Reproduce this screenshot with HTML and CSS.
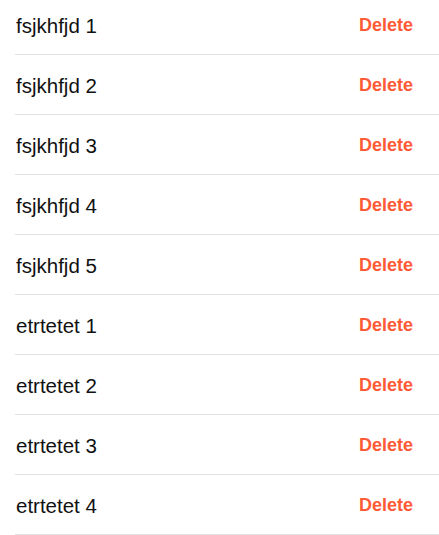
FILE: index.html
```html
<!DOCTYPE html>
<html>
<head>
<meta charset="utf-8">
<link rel="stylesheet" href="styles.css">
</head>
<body>
<ul class="list">
  <li class="row"><span class="label">fsjkhfjd 1</span><button class="del">Delete</button></li>
  <li class="row"><span class="label">fsjkhfjd 2</span><button class="del">Delete</button></li>
  <li class="row"><span class="label">fsjkhfjd 3</span><button class="del">Delete</button></li>
  <li class="row"><span class="label">fsjkhfjd 4</span><button class="del">Delete</button></li>
  <li class="row"><span class="label">fsjkhfjd 5</span><button class="del">Delete</button></li>
  <li class="row"><span class="label">etrtetet 1</span><button class="del">Delete</button></li>
  <li class="row"><span class="label">etrtetet 2</span><button class="del">Delete</button></li>
  <li class="row"><span class="label">etrtetet 3</span><button class="del">Delete</button></li>
  <li class="row"><span class="label">etrtetet 4</span><button class="del">Delete</button></li>
</ul>
</body>
</html>
```
FILE: styles.css
```css
html, body {
  margin: 0;
  padding: 0;
  background: #ffffff;
  overflow: hidden;
}
.list {
  list-style: none;
  margin: -5px 0 0 15px;
  padding: 0;
}
.row {
  box-sizing: border-box;
  height: 60px;
  border-bottom: 1px solid #e2e2e2;
  display: flex;
  align-items: center;
  justify-content: space-between;
  padding: 2px 26px 0 1px;
}
.label {
  font-family: "Liberation Sans", Arial, sans-serif;
  font-size: 20.5px;
  color: #111111;
}
.del {
  border: none;
  background: none;
  padding: 0;
  font-family: "Liberation Sans", Arial, sans-serif;
  font-weight: bold;
  font-size: 18px;
  color: #ff5a36;
}
```
